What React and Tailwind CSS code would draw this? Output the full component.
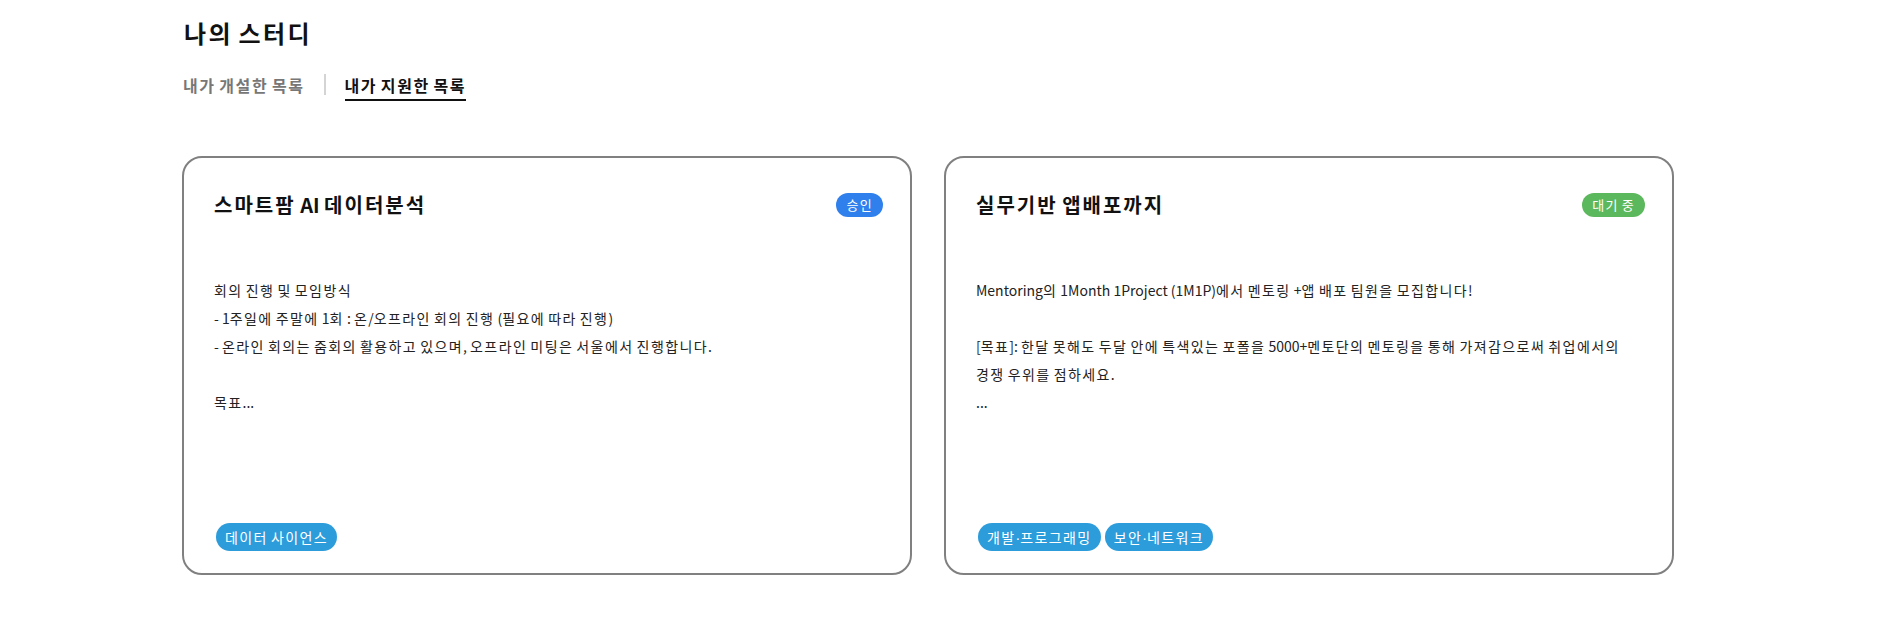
import React, { useState } from "react";

// Noto's hangul is a bit narrower than the original font, so hangul runs get a little tracking
const HANGUL = /([\uAC00-\uD7A3]+)/;

const Ko = ({ text }) =>
  text.split(HANGUL).map((part, i) => {
    if (HANGUL.test(part)) {
      return (
        <span key={i} className="tracking-[0.1em]">
          {part}
        </span>
      );
    }
    if (part === "·") {
      return (
        <span key={i} className="font-['Liberation_Sans']">
          {part}
        </span>
      );
    }
    return part;
  });

const studies = [
  {
    id: 1,
    title: "스마트팜 AI 데이터분석",
    status: "승인",
    statusColor: "bg-[#2f80ed]",
    lines: [
      "회의 진행 및 모임방식",
      "- 1주일에 주말에 1회 : 온/오프라인 회의 진행 (필요에 따라 진행)",
      "- 온라인 회의는 줌회의 활용하고 있으며, 오프라인 미팅은 서울에서 진행합니다.",
      "",
      "목표...",
    ],
    tags: ["데이터 사이언스"],
  },
  {
    id: 2,
    title: "실무기반 앱배포까지",
    status: "대기 중",
    statusColor: "bg-[#5cb85c]",
    lines: [
      "Mentoring의 1Month 1Project (1M1P)에서 멘토링 +앱 배포 팀원을 모집합니다!",
      "",
      "[목표]: 한달 못해도 두달 안에 특색있는 포폴을 5000+멘토단의 멘토링을 통해 가져감으로써 취업에서의",
      "경쟁 우위를 점하세요.",
      "...",
    ],
    tags: ["개발·프로그래밍", "보안·네트워크"],
  },
];

const StudyCard = ({ study }) => {
  return (
    <div className="w-[730px] h-[419px] flex-none flex flex-col border-2 border-[#808080] rounded-[20px] bg-white pl-[30px] pr-[27px] pt-[33px] pb-[22px]">
      <div className="flex items-center justify-between h-7">
        <h3 className="text-[20px] leading-7 font-bold text-[#111]">
          <Ko text={study.title} />
        </h3>
        <span
          className={`${study.statusColor} h-6 px-[10px] rounded-full text-white text-[13px] leading-6`}
        >
          <Ko text={study.status} />
        </span>
      </div>

      {/* body */}
      <div className="flex-1 mt-[57px] text-[14px] leading-[28px] text-[#222]">
        {study.lines.map((line, i) =>
          line ? (
            <div key={i} className="whitespace-nowrap">
              <Ko text={line} />
            </div>
          ) : (
            <div key={i} className="h-[28px]" />
          )
        )}
      </div>

      <div className="flex items-center gap-1 ml-[2px]">
        {study.tags.map((tag) => (
          <span
            key={tag}
            className="h-7 px-[9px] rounded-full bg-[#2d9cdb] text-white text-[14px] leading-7"
          >
            <Ko text={tag} />
          </span>
        ))}
      </div>
    </div>
  );
};

export default function App() {
  const [tab, setTab] = useState(1);

  return (
    <div
      className="w-full min-h-[622px] bg-white"
      style={{ fontFamily: '"Noto Sans CJK KR", "Noto Sans", sans-serif' }}
    >
      <div className="pl-[182px] pt-[17px]">
        <h1 className="text-[24px] leading-8 font-bold text-[#111] ml-[2px]">
          <Ko text="나의 스터디" />
        </h1>

        {/* tabs */}
        <div className="flex items-start mt-[24px] ml-[1px]">
          <button
            onClick={() => setTab(0)}
            className={`text-[16px] leading-6 font-semibold pb-[2px] border-b-2 ${
              tab === 0 ? "text-[#111] border-[#111]" : "text-[#777] border-transparent"
            }`}
          >
            <Ko text="내가 개설한 목록" />
          </button>
          <div className="w-[2px] h-[21px] bg-[#d4d4d4] mx-[19px] mt-[1px]" />
          <button
            onClick={() => setTab(1)}
            className={`text-[16px] leading-6 font-semibold pb-[2px] border-b-2 ${
              tab === 1 ? "text-[#111] border-[#111]" : "text-[#777] border-transparent"
            }`}
          >
            <Ko text="내가 지원한 목록" />
          </button>
        </div>

        {/* cards */}
        <div className="flex gap-8 mt-[55px]">
          {studies.map((study) => (
            <StudyCard key={study.id} study={study} />
          ))}
        </div>
      </div>
    </div>
  );
}
